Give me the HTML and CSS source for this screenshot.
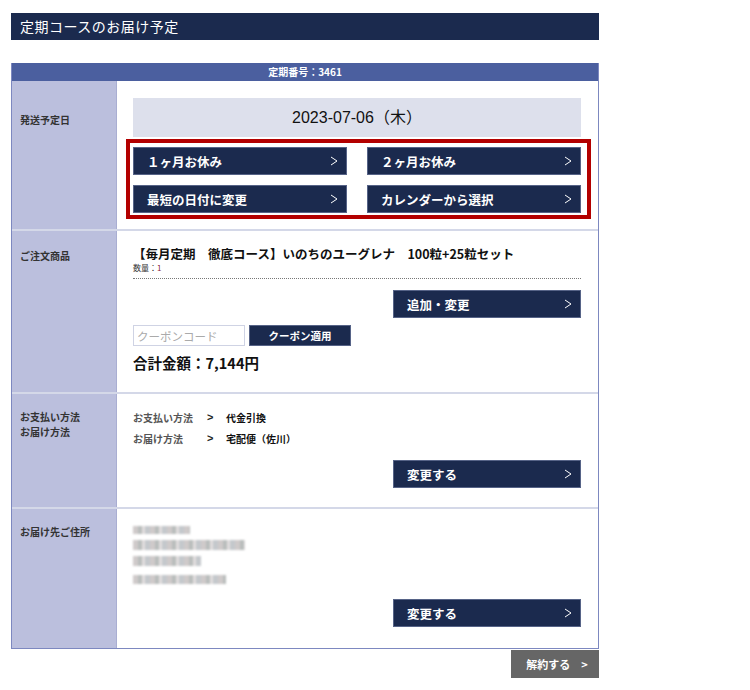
FILE: index.html
```html
<!DOCTYPE html>
<html lang="ja">
<head>
<meta charset="utf-8">
<title>定期コースのお届け予定</title>
<link rel="stylesheet" href="styles.css">
</head>
<body>
<div class="page">
  <h1 class="title">定期コースのお届け予定</h1>

  <div class="table">
    <div class="table-head">定期番号：3461</div>

    <div class="row">
      <div class="label label-first">発送予定日</div>
      <div class="cell cell-date">
        <div class="date">2023-07-06（木）</div>
        <div class="highlight">
          <div class="btn-grid">
            <a class="btn">１ヶ月お休み<svg class="chev" viewBox="0 0 8 10"><polyline points="1,1 7,5 1,9"/></svg></a>
            <a class="btn">２ヶ月お休み<svg class="chev" viewBox="0 0 8 10"><polyline points="1,1 7,5 1,9"/></svg></a>
            <a class="btn">最短の日付に変更<svg class="chev" viewBox="0 0 8 10"><polyline points="1,1 7,5 1,9"/></svg></a>
            <a class="btn">カレンダーから選択<svg class="chev" viewBox="0 0 8 10"><polyline points="1,1 7,5 1,9"/></svg></a>
          </div>
        </div>
      </div>
    </div>

    <div class="row">
      <div class="label label-order">ご注文商品</div>
      <div class="cell cell-order">
        <div class="product">【毎月定期　徹底コース】いのちのユーグレナ　100粒+25粒セット</div>
        <div class="qty">数量：<span class="qty-num">1</span></div>
        <div class="right"><a class="btn btn-wide">追加・変更<svg class="chev" viewBox="0 0 8 10"><polyline points="1,1 7,5 1,9"/></svg></a></div>
        <div class="coupon">
          <input class="coupon-input" type="text" placeholder="クーポンコード">
          <button class="coupon-btn">クーポン適用</button>
        </div>
        <div class="total">合計金額：7,144円</div>
      </div>
    </div>

    <div class="row">
      <div class="label label-pay">お支払い方法<br>お届け方法</div>
      <div class="cell cell-pay">
        <div class="detail"><span class="dk">お支払い方法</span><span class="dg">&gt;</span><span class="dv">代金引換</span></div>
        <div class="detail"><span class="dk">お届け方法</span><span class="dg">&gt;</span><span class="dv">宅配便（佐川）</span></div>
        <div class="right right-pay"><a class="btn btn-wide">変更する<svg class="chev" viewBox="0 0 8 10"><polyline points="1,1 7,5 1,9"/></svg></a></div>
      </div>
    </div>

    <div class="row row-last">
      <div class="label label-addr">お届け先ご住所</div>
      <div class="cell cell-addr">
        <div class="addr">
          <span class="blur b1"></span>
          <span class="blur b2"></span>
          <span class="blur b3"></span>
          <span class="blur b4"></span>
        </div>
        <div class="right right-addr"><a class="btn btn-wide">変更する<svg class="chev" viewBox="0 0 8 10"><polyline points="1,1 7,5 1,9"/></svg></a></div>
      </div>
    </div>
  </div>

  <div class="cancel-wrap"><a class="cancel">解約する　&gt;</a></div>
</div>
</body>
</html>
```

FILE: styles.css
```css
* { box-sizing: border-box; }
body {
  margin: 0;
  background: #fff;
  font-family: "Liberation Sans", "Noto Sans CJK JP", sans-serif;
  color: #222;
}
.page {
  width: 588px;
  margin: 13px 0 0 11px;
}
.title {
  margin: 0;
  height: 27px;
  background: #1b2a4e;
  color: #fff;
  font-family: "Noto Sans CJK JP", serif;
  font-weight: 400;
  font-size: 14px;
  line-height: 27px;
  padding-left: 9px;
  letter-spacing: 0.5px;
}
.table {
  margin-top: 23px;
  border: 1px solid #7d88c0;
  border-top: none;
}
.table-head {
  height: 18px;
  background: #4b5f9f;
  color: #fff;
  font-size: 10px;
  font-weight: bold;
  text-align: center;
  line-height: 18px;
  font-family: "Noto Sans CJK JP", sans-serif;
}
.row {
  display: grid;
  grid-template-columns: 105px 1fr;
  border-bottom: 2px solid #d4d8e8;
}
.row-last { border-bottom: none; }
.label {
  background: #bbbfdd;
  border-right: 1px solid #a9aed2;
  font-family: "Noto Sans CJK JP", sans-serif;
  font-size: 10px;
  font-weight: bold;
  color: #333;
  padding-left: 8px;
  line-height: 15px;
}
.label-first { padding-top: 31px; }
.label-order { padding-top: 17px; }
.label-pay { padding-top: 15px; }
.label-addr { padding-top: 15px; }
.cell {
  padding: 17px 17px 11px 16px;
}
.cell-date { padding-bottom: 10px; }
.date {
  height: 39px;
  background: #dde0ec;
  text-align: center;
  line-height: 39px;
  font-size: 16px;
  color: #111;
}
.highlight {
  margin: 2px -10px 0 -7px;
  border: 4px solid #b30000;
  padding: 4px 6px 2px 3px;
}
.btn-grid {
  display: grid;
  grid-template-columns: 214px 214px;
  justify-content: space-between;
  row-gap: 10px;
}
.btn {
  display: flex;
  align-items: center;
  justify-content: space-between;
  height: 28px;
  background: #1b2a4e;
  border: 1px solid #566387;
  color: #fff;
  font-family: "Noto Sans CJK JP", sans-serif;
  font-size: 12.5px;
  font-weight: bold;
  padding: 0 8px 0 13px;
  text-decoration: none;
}
.chev {
  width: 8px;
  height: 10px;
  fill: none;
  stroke: #fff;
  stroke-width: 1;
}
.cell-order { padding-top: 14px; padding-bottom: 19px; }
.product {
  font-family: "Noto Sans CJK JP", sans-serif;
  font-size: 12.5px;
  font-weight: bold;
  line-height: 17px;
  color: #111;
}
.qty {
  font-family: "Noto Sans CJK JP", sans-serif;
  font-size: 8px;
  line-height: 12px;
  color: #333;
  padding-bottom: 4px;
  border-bottom: 1px dotted #777;
}
.qty-num { color: #8a1f3c; }
.right {
  display: flex;
  justify-content: flex-end;
  margin-top: 11px;
}
.btn-wide { width: 188px; }
.coupon {
  display: flex;
  gap: 4px;
  margin-top: 7px;
}
.coupon-input {
  width: 112px;
  height: 21px;
  border: 1px solid #cfd3e4;
  font-family: "Noto Sans CJK JP", sans-serif;
  font-size: 11.5px;
  padding: 0 3px;
  margin: 0;
  outline: none;
}
.coupon-input::placeholder { color: #aaa; }
.coupon-btn {
  width: 102px;
  height: 21px;
  background: #1b2a4e;
  border: 1px solid #566387;
  color: #fff;
  font-family: "Noto Sans CJK JP", sans-serif;
  font-size: 10.5px;
  font-weight: bold;
  padding: 0;
  margin: 0;
}
.total {
  margin-top: 7px;
  font-family: "Noto Sans CJK JP", sans-serif;
  font-size: 14.5px;
  font-weight: bold;
  line-height: 20px;
  color: #111;
}
.cell-pay { padding-top: 13px; padding-bottom: 19px; }
.detail {
  display: flex;
  font-family: "Noto Sans CJK JP", sans-serif;
  font-size: 10px;
  font-weight: bold;
  line-height: 21px;
}
.dk { width: 74px; color: #555; }
.dg { width: 19px; color: #222; font-family: "Liberation Sans", sans-serif; font-size: 11px; }
.dv { color: #111; }
.right-pay { margin-top: 11px; }
.cell-addr { padding-top: 17px; padding-bottom: 21px; }
.addr {
  display: flex;
  flex-direction: column;
  align-items: flex-start;
}
.blur {
  display: block;
  filter: blur(0.8px);
  background: repeating-linear-gradient(90deg, #cfcaca 0 5px, #b9bdbc 5px 9px, #e2dede 9px 12px, #c4c8cc 12px 17px);
}
.b1 { width: 57px; height: 8px; }
.b2 { width: 112px; height: 10px; margin-top: 6px; }
.b3 { width: 68px; height: 10px; margin-top: 6px; }
.b4 { width: 93px; height: 9px; margin-top: 9px; }
.right-addr { margin-top: 15px; }
.cancel-wrap {
  display: flex;
  justify-content: flex-end;
  margin-top: 1px;
}
.cancel {
  width: 88px;
  height: 28px;
  background: #666;
  color: #fff;
  font-family: "Noto Sans CJK JP", sans-serif;
  font-size: 11px;
  font-weight: bold;
  line-height: 28px;
  text-align: center;
  padding-left: 4px;
}
```
